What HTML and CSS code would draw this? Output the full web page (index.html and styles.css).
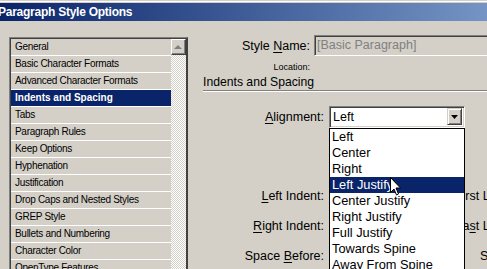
FILE: index.html
```html
<!DOCTYPE html>
<html lang="en">
<head>
    <meta charset="UTF-8">
    <title>Paragraph Style Options</title>
    <link rel="stylesheet" href="styles.css">
</head>
<body>

    <!-- Title bar -->
    <div class="titlebar">
        <span class="title">Paragraph Style Options</span>
    </div>

    <div class="dialog">
        <!-- Category list -->
        <div class="categories">
            <div class="cat-inner">
                <ul class="cat-list">
                    <li>General</li>
                    <li>Basic Character Formats</li>
                    <li>Advanced Character Formats</li>
                    <li class="selected">Indents and Spacing</li>
                    <li>Tabs</li>
                    <li>Paragraph Rules</li>
                    <li>Keep Options</li>
                    <li>Hyphenation</li>
                    <li>Justification</li>
                    <li>Drop Caps and Nested Styles</li>
                    <li>GREP Style</li>
                    <li>Bullets and Numbering</li>
                    <li>Character Color</li>
                    <li>OpenType Features</li>
                </ul>
                <div class="scrollbar">
                    <div class="scroll-btn">
                        <svg width="9" height="5" viewBox="0 0 9 5"><polygon points="4,0 8,4 0,4" fill="#808080"/></svg>
                    </div>
                </div>
            </div>
        </div>

        <!-- Settings panel -->
        <div class="panel">
            <div class="name-row">
                <label>Style <u>N</u>ame:</label>
                <div class="textbox">[Basic Paragraph]</div>
            </div>
            <div class="location">Location:</div>
            <div class="section-title">Indents and Spacing</div>

            <div class="align-row">
                <label><u>A</u>lignment:</label>
                <div class="select">
                    <span class="select-value">Left</span>
                    <span class="drop-btn">
                        <svg width="7" height="4" viewBox="0 0 7 4"><polygon points="0,0 7,0 3.5,4" fill="#000"/></svg>
                    </span>
                </div>
            </div>

            <div class="indent-grid">
                <label><u>L</u>eft Indent:</label>
                <div class="field"></div>
                <label>First Line Indent:</label>
                <div class="field"></div>

                <label><u>R</u>ight Indent:</label>
                <div class="field"></div>
                <label>La<u>s</u>t Line Indent:</label>
                <div class="field"></div>

                <label>Space <u>B</u>efore:</label>
                <div class="field"></div>
                <label>Space After:</label>
                <div class="field"></div>
            </div>
        </div>
    </div>

    <!-- Open alignment menu -->
    <ul class="dropdown">
        <li>Left</li>
        <li>Center</li>
        <li>Right</li>
        <li class="selected">Left Justify</li>
        <li>Center Justify</li>
        <li>Right Justify</li>
        <li>Full Justify</li>
        <li>Towards Spine</li>
        <li>Away From Spine</li>
    </ul>

    <svg class="cursor" width="12" height="19" viewBox="0 0 12 19">
        <polygon points="0.5,0.5 0.5,15.5 4,12 6.5,18 8.5,17 6,11 10.5,11" fill="#fff" stroke="#000" stroke-width="1"/>
    </svg>

</body>
</html>
```

FILE: styles.css
```css
/* Reset */
* {
    margin: 0;
    padding: 0;
    box-sizing: border-box;
}

body {
    width: 487px;
    height: 269px;
    overflow: hidden;
    position: relative;
    background: #d4d0c8;
    font-family: "Liberation Sans", Arial, sans-serif;
    color: #000;
}

ul {
    list-style: none;
}

/* Title bar */
.titlebar {
    margin-top: 3px;
    height: 18px;
    background: linear-gradient(to right, #0a246a, #a6caf0 720px);
    box-shadow: 0 -1px 0 #d4d0c8, 0 -2px 0 #fff;
    white-space: nowrap;
    overflow: hidden;
}

.titlebar .title {
    display: block;
    margin-left: -2px;
    font-weight: bold;
    font-size: 12px;
    letter-spacing: -0.25px;
    line-height: 18px;
    color: #fff;
}

.dialog {
    display: flex;
    align-items: flex-start;
}

/* Category list */
.categories {
    margin: 16px 0 0 9px;
    border: 1px solid;
    border-color: #808080 #404040 #404040 #808080;
}

.cat-inner {
    display: flex;
    border-top: 1px solid #404040;
    border-left: 1px solid #404040;
    border-right: 1px solid #404040;
}

.cat-list {
    width: 160px;
}

.cat-list li {
    height: 17px;
    line-height: 16px;
    padding-left: 4px;
    border-bottom: 1px solid #fff;
    font-size: 10px;
    letter-spacing: -0.3px;
    white-space: nowrap;
}

.cat-list li.selected {
    background: #0a246a;
    color: #fff;
    font-weight: bold;
    letter-spacing: 0;
}

.scrollbar {
    width: 15px;
    align-self: stretch;
    background: repeating-conic-gradient(#fff 0 25%, #d4d0c8 0 50%) 0 0 / 2px 2px;
}

.scroll-btn {
    height: 16px;
    display: flex;
    align-items: center;
    justify-content: center;
    background: #d4d0c8;
    border: 1px solid;
    border-color: #fff #404040 #404040 #fff;
    box-shadow: inset -1px -1px 0 #808080;
}

/* Settings panel */
.panel {
    flex: 1;
    font-size: 12.5px;
    white-space: nowrap;
}

.panel u {
    text-decoration-thickness: 1px;
    text-underline-offset: 2px;
}

.name-row {
    display: grid;
    grid-template-columns: 122px 200px;
    column-gap: 4px;
    align-items: center;
    margin-top: 14px;
}

.name-row label,
.align-row label,
.indent-grid label {
    text-align: right;
}

.textbox {
    height: 21px;
    line-height: 17px;
    padding-left: 2px;
    color: #808080;
    border: 1px solid;
    border-color: #808080 #fff #fff #808080;
    box-shadow: inset 1px 1px 0 #404040;
    padding-top: 1px;
}

.location {
    width: 122px;
    margin-top: 6px;
    text-align: right;
    font-size: 9px;
    line-height: 10px;
}

.section-title {
    margin: 3px 0 0 15px;
    width: 400px;
    line-height: 15px;
    font-size: 12.2px;
    border-bottom: 1px solid #808080;
    box-shadow: 0 1px 0 #fff;
}

.align-row {
    display: grid;
    grid-template-columns: 136px 136px;
    column-gap: 5px;
    align-items: center;
    margin-top: 15px;
}

.select {
    height: 22px;
    display: flex;
    align-items: center;
    justify-content: space-between;
    background: #fff;
    border: 1px solid;
    border-color: #808080 #fff #fff #808080;
    box-shadow: inset 1px 1px 0 #404040, inset -1px -1px 0 #d4d0c8;
    padding: 1px 2px 2px 3px;
}

.drop-btn {
    width: 15px;
    height: 17px;
    display: flex;
    align-items: center;
    justify-content: center;
    background: #d4d0c8;
    border: 1px solid;
    border-color: #d4d0c8 #404040 #404040 #d4d0c8;
    box-shadow: inset 1px 1px 0 #fff, inset -1px -1px 0 #808080;
}

.indent-grid {
    display: grid;
    grid-template-columns: 136px 114px 100px 60px;
    column-gap: 5px;
    row-gap: 8px;
    grid-auto-rows: 22px;
    align-items: center;
    margin-top: 57px;
}

.indent-grid .field {
    height: 22px;
}

/* Open menu over the panel */
.dropdown {
    position: absolute;
    left: 329px;
    top: 128px;
    width: 136px;
    background: #fff;
    border: 1px solid #000;
    font-size: 12.8px;
}

.dropdown li {
    height: 16px;
    line-height: 16px;
    padding-left: 2px;
    white-space: nowrap;
}

.dropdown li.selected {
    background: #0a246a;
    color: #fff;
}

.cursor {
    position: absolute;
    left: 390px;
    top: 177px;
}
```
